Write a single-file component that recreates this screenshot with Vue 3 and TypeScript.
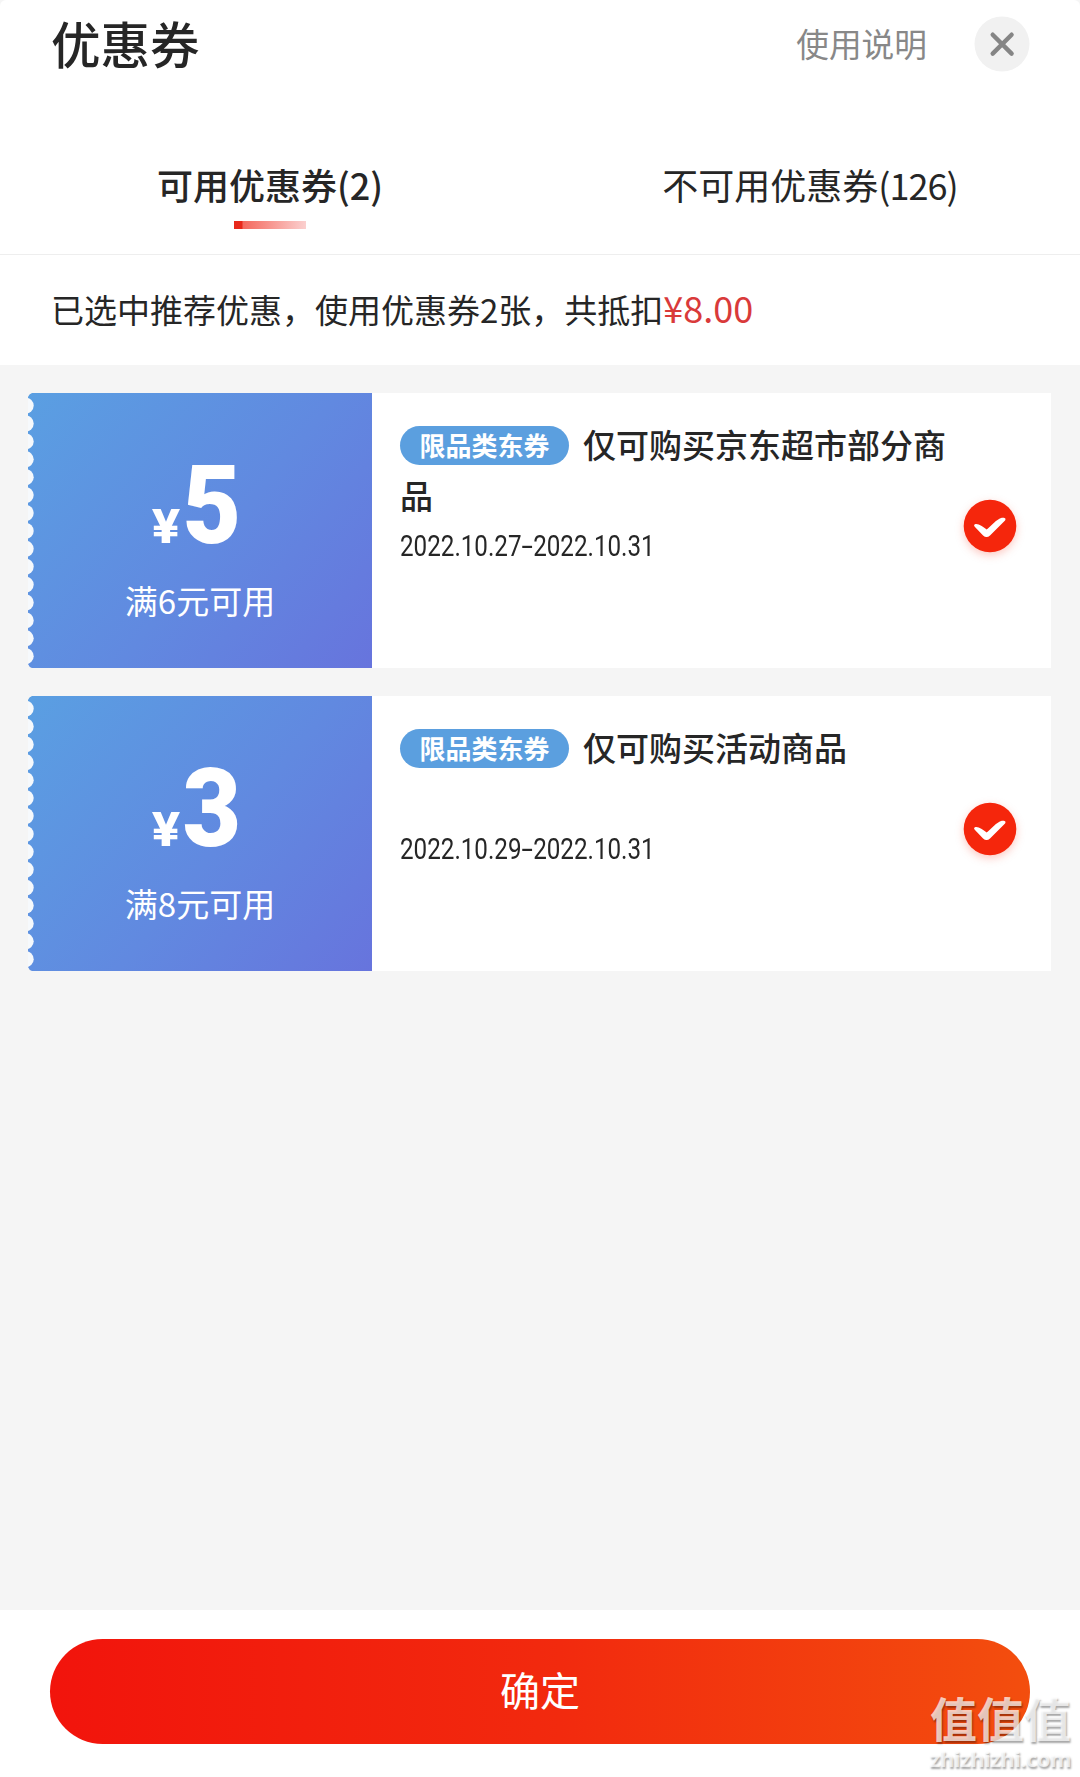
<script setup lang="ts">
interface Coupon {
  id: number
  amount: number
  threshold: number
  tag: string
  title: string
  from: string
  to: string
}

const coupons: Coupon[] = [
  { id: 1, amount: 5, threshold: 6, tag: '限品类东券', title: '仅可购买京东超市部分商品', from: '2022.10.27', to: '2022.10.31' },
  { id: 2, amount: 3, threshold: 8, tag: '限品类东券', title: '仅可购买活动商品', from: '2022.10.29', to: '2022.10.31' },
]

// Centres of the perforations down the left edge of a coupon
const notches: number[] = Array.from({ length: 15 }, (_, i) => 12.6 + i * 17.9)
</script>

<template>
  <div class="sheet">
    <header class="head">
      <h1 class="title">优惠券</h1>
      <span class="help">使用说明</span>
      <button class="close" aria-label="关闭">
        <svg width="56" height="56" viewBox="0 0 56 56">
          <circle cx="28" cy="28" r="27.5" fill="#f1f1f1" />
          <path d="M18.7 18.7 37.6 37.6M37.6 18.7 18.7 37.6" stroke="#858585" stroke-width="4.4" stroke-linecap="round" />
        </svg>
      </button>
    </header>

    <nav class="tabs">
      <div class="tab active"><span>可用优惠券(2)</span><i class="bar"></i></div>
      <div class="tab"><span>不可用优惠券<span class="count">(126)</span></span></div>
    </nav>

    <p class="notice">已选中推荐优惠，使用优惠券2张，共抵扣<span class="saving">¥8.00</span></p>

    <main class="list">
      <article v-for="c in coupons" :key="c.id" class="coupon">
        <div class="face">
          <svg class="edge" width="12" height="275" viewBox="0 0 12 275">
            <path d="M0 0H4Q1 1 0 4ZM0 275H4Q1 274 0 271Z" fill="#f5f5f5" />
            <circle v-for="y in notches" :key="y" cx="-2.3" :cy="y" r="8" fill="#f6f9fc" />
          </svg>
          <div class="amount"><span class="yen">¥</span><span class="num">{{ c.amount }}</span></div>
          <div class="cond">满{{ c.threshold }}元可用</div>
        </div>
        <div class="info">
          <div class="desc"><span class="tag">{{ c.tag }}</span>{{ c.title }}</div>
          <div class="date"><span class="period">{{ c.from }}<span class="dash">-</span>{{ c.to }}</span></div>
        </div>
        <div class="pick">
          <svg width="72" height="72" viewBox="0 0 72 72">
            <circle cx="36" cy="36" r="26.3" fill="#f5260c" />
            <path d="M21 34.2C24.500 33.400 28.500 36.200 32.700 39.600C37.500 35.500 42.500 29.300 47.800 27.800C50.800 27.200 52.600 28.600 50.800 30.800L36 45.500C33.800 47.500 31.300 47.500 29.100 45.500L21.200 37.300C19.800 35.800 19.700 34.700 21 34.200Z" fill="#fff" />
          </svg>
        </div>
      </article>
    </main>

    <footer class="foot">
      <button class="confirm">确定</button>
    </footer>

    <div class="mark">
      <div class="mark-name">值值值</div>
      <div class="mark-url">zhizhizhi.com</div>
    </div>
  </div>
</template>

<style>
body {
  background: #f5f5f5;
}
</style>

<style scoped>
.sheet {
  position: relative;
  display: flex;
  flex-direction: column;
  width: 1080px;
  height: 1777px;
  overflow: hidden;
  border-radius: 6px 6px 0 0;
  background: #fff;
  color: #262626;
  font-family: "Noto Sans CJK SC", sans-serif;
}
button {
  padding: 0;
  border: 0;
  background: none;
  font-family: inherit;
}
.head {
  display: flex;
  align-items: center;
  height: 88px;
  padding: 0 50px 0 51px;
}
.title {
  flex: 1;
  height: 88px;
  margin: 0;
  font-size: 49.5px;
  font-weight: 500;
  line-height: 85px;
}
.help {
  height: 88px;
  margin-right: 47px;
  color: #888;
  font-size: 32.700px;
  line-height: 86px;
}
.close,
.close svg {
  display: block;
  width: 56px;
  height: 56px;
}
.tabs {
  display: flex;
  height: 166px;
  border-bottom: 1px solid #eee;
}
.tab {
  display: flex;
  flex: 1;
  flex-direction: column;
  align-items: center;
  padding-top: 70px;
  font-size: 36px;
  line-height: 52px;
}
.active {
  font-weight: 500;
}
.count {
  letter-spacing: -1px;
}
.bar {
  width: 72px;
  height: 8px;
  margin-top: 11px;
  background: linear-gradient(90deg, #e8291b 0, #e8291b 8px, #f4695e 9px, #fbd0cf 100%);
}
.notice {
  height: 110px;
  margin: 0;
  padding-left: 51px;
  font-size: 33px;
  line-height: 104px;
  white-space: nowrap;
}
.saving {
  color: #d93a3a;
  font-size: 36px;
}
.list {
  display: flex;
  flex: 1;
  flex-direction: column;
  gap: 28px;
  padding: 28px 29px 0 28px;
  background: #f5f5f5;
}
.coupon {
  display: flex;
  height: 275px;
  background: #fff;
}
.face {
  position: relative;
  width: 344px;
  background: linear-gradient(129deg, #5a9fe2 0%, #6189e0 55%, #6774dd 100%);
  color: #fff;
  text-align: center;
}
.edge {
  position: absolute;
  top: 0;
  left: 0;
}
.amount {
  display: flex;
  justify-content: center;
  align-items: baseline;
  height: 120px;
  margin-top: 53px;
  padding-right: 4px;
  font-family: Roboto, sans-serif;
  line-height: 120px;
}
.yen {
  margin-right: 1px;
  font-size: 48px;
  font-weight: 800;
  transform: scaleX(1.1);
}
.num {
  font-size: 110px;
  font-weight: 900;
  transform: scaleX(0.92);
}
.cond {
  margin-top: 9px;
  font-size: 33px;
  line-height: 50px;
}
.info {
  width: 552px;
  padding: 26px 0 0 28px;
}
.desc {
  height: 104px;
  font-size: 33px;
  font-weight: 500;
  line-height: 51px;
}
.tag {
  display: inline-block;
  width: 169px;
  height: 39px;
  margin-right: 14px;
  border-radius: 20px;
  background: #5b9fdf;
  color: #fff;
  font-size: 26px;
  font-weight: 700;
  line-height: 37px;
  text-align: center;
  vertical-align: 2px;
}
.date {
  font-family: Roboto, sans-serif;
  font-size: 29.5px;
  line-height: 46px;
  white-space: nowrap;
}
.period {
  display: inline-block;
  transform: scaleX(0.82);
  transform-origin: 0 50%;
}
.dash {
  display: inline-block;
  margin: 0 3px;
  transform: scaleX(1.7);
}
.pick {
  display: flex;
  align-items: center;
  height: 266px;
  margin-left: 2px;
}
.pick svg {
  filter: drop-shadow(0 3px 4px rgba(245, 38, 12, 0.25));
}
.foot {
  height: 138px;
  padding: 29px 50px 0;
  background: #fff;
}
.confirm {
  display: block;
  width: 980px;
  height: 105px;
  padding-bottom: 5px;
  border-radius: 53px;
  background: linear-gradient(90deg, #f2140c 0%, #f22a0e 52%, #f34e0e 100%);
  color: #fff;
  font-size: 40px;
  line-height: 100px;
}
.mark {
  position: absolute;
  right: 9px;
  bottom: 5px;
  color: rgba(255, 255, 255, 0.72);
  text-shadow: 1px 2px 2px rgba(0, 0, 0, 0.35);
  font-weight: 700;
  text-align: right;
}
.mark-name {
  font-size: 47px;
  line-height: 54px;
}
.mark-url {
  font-family: "Noto Sans", sans-serif;
  font-size: 22px;
  line-height: 28px;
  letter-spacing: -0.5px;
}
</style>
